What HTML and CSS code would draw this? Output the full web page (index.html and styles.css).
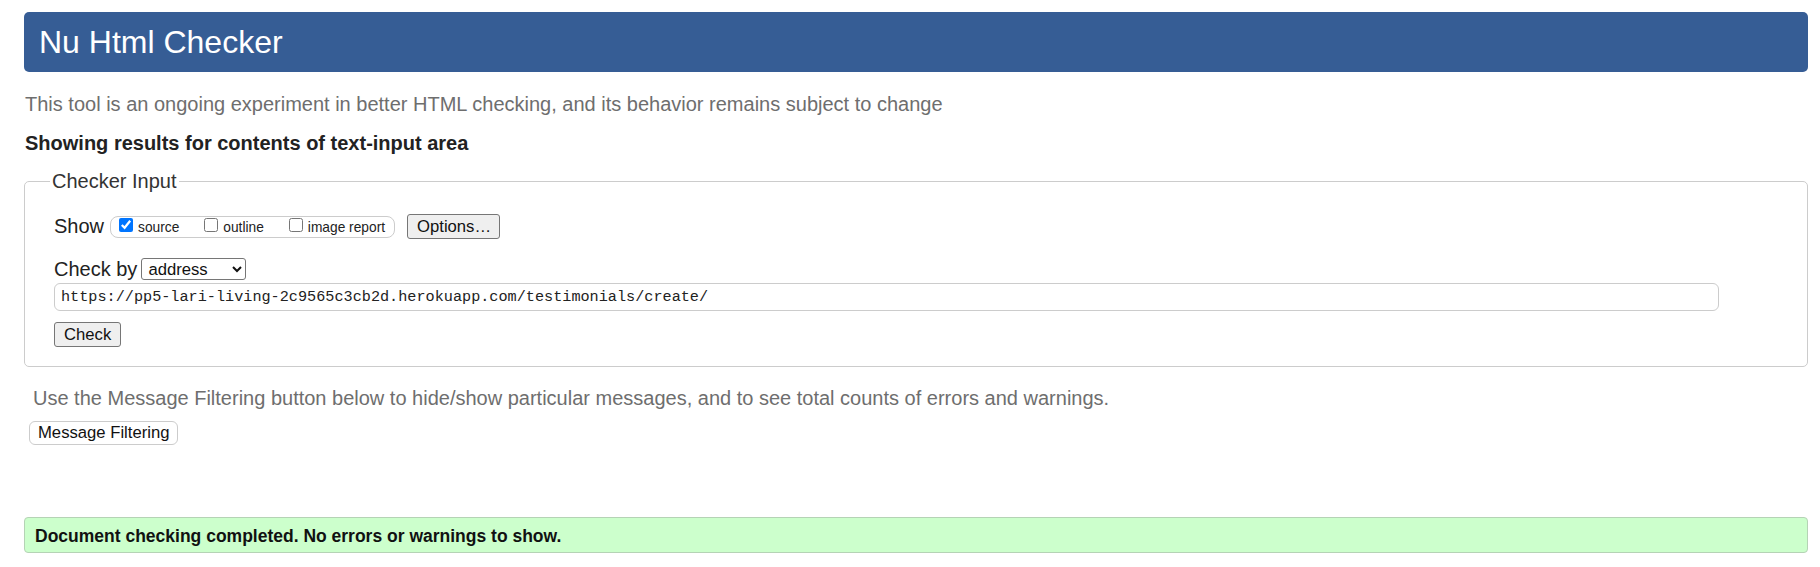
FILE: index.html
```html
<!DOCTYPE html>
<html lang="en">
<head>
<meta charset="utf-8">
<title>Nu Html Checker</title>
<link rel="stylesheet" href="styles.css">
</head>
<body>
<h1 class="title">Nu Html Checker</h1>
<p class="intro">This tool is an ongoing experiment in better HTML checking, and its behavior remains subject to change</p>
<p class="showing">Showing results for contents of text-input area</p>
<form class="checker">
  <fieldset class="input-set">
    <legend class="legend">Checker Input</legend>
    <div class="row row-show">
      <span class="label">Show</span>
      <span class="pill">
        <label class="opt"><input type="checkbox" class="cb" checked><span>source</span></label>
        <label class="opt"><input type="checkbox" class="cb"><span>outline</span></label>
        <label class="opt"><input type="checkbox" class="cb"><span>image report</span></label>
      </span>
      <button type="button" class="btn btn-options">Options…</button>
    </div>
    <div class="row row-by">
      <span class="label">Check by</span>
      <select class="sel"><option>address</option></select>
    </div>
    <input class="url" type="text" value="https://pp5-lari-living-2c9565c3cb2d.herokuapp.com/testimonials/create/">
    <div class="row-submit"><button type="button" class="btn btn-check">Check</button></div>
  </fieldset>
</form>
<p class="filter-note">Use the Message Filtering button below to hide/show particular messages, and to see total counts of errors and warnings.</p>
<button type="button" class="btn-filter">Message Filtering</button>
<p class="success">Document checking completed. No errors or warnings to show.</p>
</body>
</html>
```
FILE: styles.css
```css
html, body {
  margin: 0;
}
body {
  padding: 12px 12px 0 24px;
  font-family: "Liberation Sans", Arial, sans-serif;
  color: #222;
  background: #fff;
}
.title {
  margin: 0;
  height: 60px;
  line-height: 60px;
  font-size: 32px;
  font-weight: normal;
  color: #fff;
  background: #365d95;
  border-radius: 5px;
  padding-left: 15px;
}
.intro {
  margin: 21px 0 0 1px;
  font-size: 20px;
  line-height: 23px;
  color: #6e6e6e;
}
.showing {
  margin: 16px 0 0 1px;
  font-size: 20px;
  line-height: 23px;
  font-weight: bold;
  color: #222;
}
.checker {
  margin: 15px 0 0;
}
.input-set {
  margin: 0;
  min-width: 0;
  border: 1px solid #ccc;
  border-radius: 5px;
  padding: 21px 30px 19px 29px;
}
.legend {
  margin-left: -4px;
  padding: 0 2px;
  font-size: 20px;
  line-height: 23px;
  color: #333;
}
.row {
  display: flex;
  align-items: center;
}
.row-show {
  height: 25px;
}
.label {
  font-size: 20px;
  line-height: 23px;
  color: #222;
}
.pill {
  margin-left: 6px;
  height: 20px;
  display: flex;
  align-items: center;
  border: 1px solid #ccc;
  border-radius: 8px;
  padding: 0 9px 0 8px;
}
.opt {
  display: flex;
  align-items: center;
  gap: 5px;
  font-size: 13.75px;
  color: #222;
  margin-right: 25px;
}
.opt:last-child {
  margin-right: 0;
}
.opt span {
  position: relative;
  top: 1px;
}
.cb {
  width: 14px;
  height: 14px;
  margin: 0;
  align-self: flex-start;
  margin-top: -1px;
}
.btn {
  height: 25px;
  font-family: "Liberation Sans", Arial, sans-serif;
  font-size: 16.67px;
  color: #111;
  background: #efefef;
  border: 1px solid #767676;
  border-radius: 3px;
  padding: 0 9px;
}
.btn-options {
  margin-left: 12px;
  padding: 0 8px 0 9px;
}
.row-by {
  margin-top: 19px;
  height: 22px;
}
.sel {
  margin-left: 4px;
  width: 105px;
  height: 22px;
  font-family: "Liberation Sans", Arial, sans-serif;
  font-size: 16.67px;
  color: #111;
  background: #fff;
  border: 1px solid #767676;
  border-radius: 3px;
  padding: 0 2px;
}
.url {
  display: block;
  box-sizing: border-box;
  margin: 3px 0 0;
  width: calc(100% - 58px);
  height: 28px;
  border: 1px solid #ccc;
  border-radius: 6px;
  padding: 0 6px;
  font-family: "Liberation Mono", "DejaVu Sans Mono", monospace;
  font-size: 15.2px;
  color: #222;
}
.row-submit {
  margin-top: 11px;
  display: flex;
}
.filter-note {
  margin: 20px 0 0 9px;
  font-size: 20px;
  line-height: 23px;
  color: #6e6e6e;
}
.btn-filter {
  display: block;
  margin: 11px 0 0 5px;
  height: 24px;
  padding: 0 8px;
  font-family: "Liberation Sans", Arial, sans-serif;
  font-size: 16.67px;
  color: #111;
  background: #fff;
  border: 1px solid #ccc;
  border-radius: 6px;
}
.success {
  margin: 72px 0 0;
  padding: 8px 10px 6px;
  border: 1px solid #b5d3b5;
  border-radius: 4px;
  background: #ccffcc;
  font-size: 17.5px;
  line-height: 20px;
  font-weight: bold;
  color: #111;
}
```
